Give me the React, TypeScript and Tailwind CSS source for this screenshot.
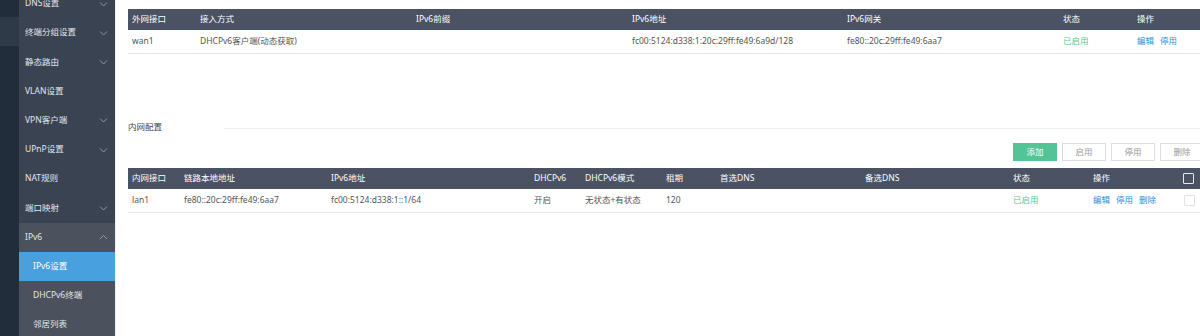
import React from "react";

const font = { fontFamily: '"Noto Sans", "Noto Sans CJK SC", sans-serif' };

function Chevron({ up = false }: { up?: boolean }) {
  return (
    <svg width="9" height="6" viewBox="0 0 9 6" className="shrink-0">
      <path
        d={up ? "M1 5 L4.5 1.5 L8 5" : "M1 1.5 L4.5 5 L8 1.5"}
        fill="none"
        stroke="#8e97a4"
        strokeWidth="1"
      />
    </svg>
  );
}

type Item = { label: string; chev?: "down" | "up" | null; kind?: "top" | "open" | "sub" | "active" };

const items: Item[] = [
  { label: "DNS设置", chev: "down" },
  { label: "终端分组设置", chev: "down" },
  { label: "静态路由", chev: "down" },
  { label: "VLAN设置" },
  { label: "VPN客户端", chev: "down" },
  { label: "UPnP设置", chev: "down" },
  { label: "NAT规则" },
  { label: "端口映射", chev: "down" },
  { label: "IPv6", chev: "up", kind: "open" },
  { label: "IPv6设置", kind: "active" },
  { label: "DHCPv6终端", kind: "sub" },
  { label: "邻居列表", kind: "sub" },
];

function Sidebar() {
  return (
    <div className="flex w-[115px] h-full shrink-0">
      <div className="w-[19px] h-full bg-[#222d3b] flex flex-col">
        <div className="h-[17px]" />
        <div className="h-[29px] bg-[#2f3a49]" />
      </div>
      <div className="w-[96px] h-full bg-[#3a4352] flex flex-col -mt-[11px]">
        {items.map((it) => {
          const bg =
            it.kind === "active"
              ? "bg-[#48a0df] text-white"
              : it.kind === "sub" || it.kind === "open"
              ? "bg-[#4b525d] text-[#e3e6ea]"
              : "text-[#e3e6ea]";
          const pl = it.kind === "active" || it.kind === "sub" ? "pl-[14px]" : "pl-[6px]";
          return (
            <div
              key={it.label}
              className={`h-[29.2px] shrink-0 flex items-center justify-between pr-[7px] text-[8.5px] ${bg} ${pl}`}
            >
              <span>{it.label}</span>
              {it.chev ? <Chevron up={it.chev === "up"} /> : null}
            </div>
          );
        })}
      </div>
    </div>
  );
}

const t1Cols = "grid-cols-[68px_216px_216px_215px_216px_74px_1fr]";
const t2Cols = "grid-cols-[52px_147px_203px_51px_81px_54px_145px_148px_80px_90px_1fr]";

function Table1() {
  const head = ["外网接口", "接入方式", "IPv6前缀", "IPv6地址", "IPv6网关", "状态", "操作"];
  return (
    <div className="text-[8.5px]">
      <div className={`grid ${t1Cols} h-[21px] bg-[#4a5263] text-white items-center`}>
        {head.map((h) => (
          <div key={h} className="pl-[4px]">{h}</div>
        ))}
      </div>
      <div className={`grid ${t1Cols} h-[24px] items-center text-[#555] border-b border-[#e8e8e8]`}>
        <div className="pl-[4px]">wan1</div>
        <div className="pl-[4px]">DHCPv6客户端(动态获取)</div>
        <div className="pl-[4px]"></div>
        <div className="pl-[4px]">fc00:5124:d338:1:20c:29ff:fe49:6a9d/128</div>
        <div className="pl-[4px]">fe80::20c:29ff:fe49:6aa7</div>
        <div className="pl-[4px] text-[#5cc590]">已启用</div>
        <div className="pl-[4px] text-[#2d8fdd] flex gap-[6px]">
          <span>编辑</span>
          <span>停用</span>
        </div>
      </div>
    </div>
  );
}

function Table2() {
  const head = ["内网接口", "链路本地地址", "IPv6地址", "DHCPv6", "DHCPv6模式", "租期", "首选DNS", "备选DNS", "状态", "操作"];
  return (
    <div className="text-[8.5px]">
      <div className={`grid ${t2Cols} h-[21px] bg-[#4a5263] text-white items-center`}>
        {head.map((h) => (
          <div key={h} className="pl-[4px]">{h}</div>
        ))}
        <div className="pl-[4px] flex">
          <div className="w-[11px] h-[11px] border border-[#e6e8ec] rounded-[1px]" />
        </div>
      </div>
      <div className={`grid ${t2Cols} h-[24px] items-center text-[#555] border-b border-[#e8e8e8]`}>
        <div className="pl-[4px]">lan1</div>
        <div className="pl-[4px]">fe80::20c:29ff:fe49:6aa7</div>
        <div className="pl-[4px]">fc00:5124:d338:1::1/64</div>
        <div className="pl-[4px]">开启</div>
        <div className="pl-[4px]">无状态+有状态</div>
        <div className="pl-[4px]">120</div>
        <div className="pl-[4px]"></div>
        <div className="pl-[4px]"></div>
        <div className="pl-[4px] text-[#5cc590]">已启用</div>
        <div className="pl-[4px] text-[#2d8fdd] flex gap-[6px]">
          <span>编辑</span>
          <span>停用</span>
          <span>删除</span>
        </div>
        <div className="pl-[5px] flex">
          <div className="w-[11px] h-[11px] border border-[#e3e3e3] rounded-[1px]" />
        </div>
      </div>
    </div>
  );
}

export default function App() {
  return (
    <div className="w-[1200px] h-[336px] overflow-hidden flex bg-white" style={font}>
      <Sidebar />
      <div className="flex-1 min-w-0 h-full border-l border-[#eef2f7] pl-[12px] pt-[9px] flex flex-col overflow-hidden">
        <Table1 />
        <div className="mt-[66px] h-[14px] flex items-center">
          <div className="w-[96px] text-[8.5px] text-[#444]">内网配置</div>
          <div className="flex-1 h-px bg-[#eeeeee] mt-[2px]" />
        </div>
        <div className="mt-[9px] flex justify-end gap-[5px] mr-[-4px] text-[8.5px]">
          <div className="w-[44px] h-[18px] bg-[#52c496] text-white flex items-center justify-center">添加</div>
          <div className="w-[44px] h-[18px] border border-[#dddddd] text-[#999] flex items-center justify-center">启用</div>
          <div className="w-[44px] h-[18px] border border-[#dddddd] text-[#999] flex items-center justify-center">停用</div>
          <div className="w-[44px] h-[18px] border border-[#dddddd] text-[#999] flex items-center justify-center">删除</div>
        </div>
        <div className="mt-[7px]">
          <Table2 />
        </div>
      </div>
    </div>
  );
}
